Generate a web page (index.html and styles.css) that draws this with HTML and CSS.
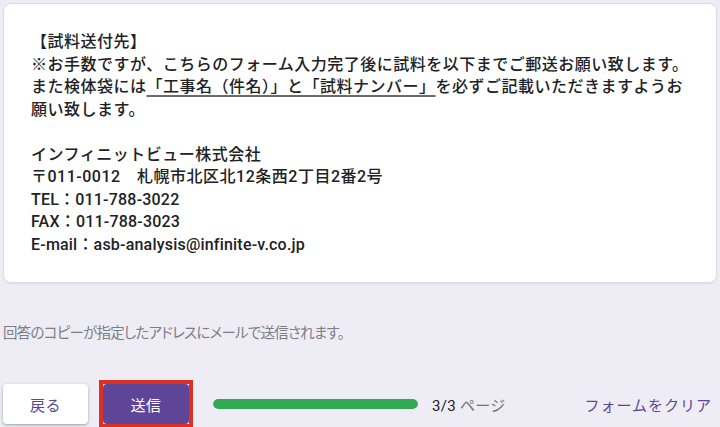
FILE: index.html
```html
<!DOCTYPE html>
<html lang="ja">
<head>
<meta charset="utf-8">
<link rel="stylesheet" href="styles.css">
</head>
<body>
<div class="page">
  <section class="card">
    <p class="line">【試料送付先】</p>
    <p class="line">※お手数ですが、こちらのフォーム入力完了後に試料を以下までご郵送お願い致します。</p>
    <p class="line">また検体袋には<span class="ul">「工事名（件名）」と「試料ナンバー」</span>を必ずご記載いただきますようお</p>
    <p class="line">願い致します。</p>
    <p class="line blank">&nbsp;</p>
    <p class="line">インフィニットビュー株式会社</p>
    <p class="line">〒011-0012　札幌市北区北12条西2丁目2番2号</p>
    <p class="line latin">TEL：011-788-3022</p>
    <p class="line latin">FAX：011-788-3023</p>
    <p class="line latin">E-mail：asb-analysis@infinite-v.co.jp</p>
  </section>
  <p class="notice">回答のコピーが指定したアドレスにメールで送信されます。</p>
  <div class="actions">
    <button class="btn back">戻る</button>
    <span class="highlight"><button class="btn submit">送信</button></span>
    <div class="progress"><div class="bar" style="width:100%"></div></div>
    <span class="pages"><span class="num">3/3</span> ページ</span>
    <button class="btn clear">フォームをクリア</button>
  </div>
</div>
</body>
</html>
```
FILE: styles.css
```css
html, body {
  margin: 0;
  padding: 0;
  background: #eeedf6;
}
body {
  font-family: Roboto, "Noto Sans CJK JP", sans-serif;
  color: #202124;
  width: 720px;
  height: 427px;
  overflow: hidden;
}
.page {
  padding: 3px 3px 0 3px;
}
.card {
  background: #fff;
  border: 1px solid #dcdbe3;
  border-radius: 8px;
  padding: 27px 20px 26px 27px;
  box-shadow: 0 1px 2px rgba(0,0,0,0.06);
}
.line {
  margin: 0;
  font-size: 16px;
  line-height: 22.5px;
  font-weight: 500;
  letter-spacing: 0.5px;
  white-space: nowrap;
}
.line.latin {
  letter-spacing: 0.2px;
}
.ul {
  text-decoration: underline;
  text-decoration-color: #6b6b6b;
  text-decoration-thickness: 1.5px;
  text-underline-offset: 3px;
}
.notice {
  margin: 40px 0 0 0;
  font-size: 14.5px;
  line-height: 22px;
  color: #7d7d86;
  font-feature-settings: "palt";
  letter-spacing: -0.75px;
}
.actions {
  display: flex;
  align-items: center;
  margin-top: 39px;
  height: 40px;
}
.btn {
  font-family: Roboto, "Noto Sans CJK JP", sans-serif;
  font-size: 14px;
  border: none;
  border-radius: 4px;
  height: 40px;
  cursor: pointer;
  letter-spacing: 0.5px;
}
.back {
  width: 85px;
  background: #fff;
  color: #5b4597;
  font-size: 15px;
  box-shadow: 0 1px 2px rgba(60,64,67,0.3), 0 1px 3px 1px rgba(60,64,67,0.12);
}
.highlight {
  display: flex;
  margin-left: 15px;
  outline: 4px solid #dc3022;
  border-radius: 0;
}
.submit {
  width: 86px;
  background: #5e4598;
  color: #fff;
  font-size: 15px;
  display: block;
}
.progress {
  margin-left: 24px;
  width: 205px;
  height: 10px;
  border-radius: 5px;
  background: #e0e0e0;
  overflow: hidden;
}
.bar {
  height: 100%;
  background: #31a854;
  border-radius: 5px;
}
.pages {
  margin-left: 14px;
  font-size: 15px;
  color: #70757a;
  letter-spacing: 0.3px;
}
.pages .num {
  color: #202124;
}
.clear {
  margin-left: auto;
  margin-right: 0;
  background: transparent;
  color: #5b4597;
  font-size: 15px;
  padding: 0 5px 0 7px;
  letter-spacing: 1px;
}
```
